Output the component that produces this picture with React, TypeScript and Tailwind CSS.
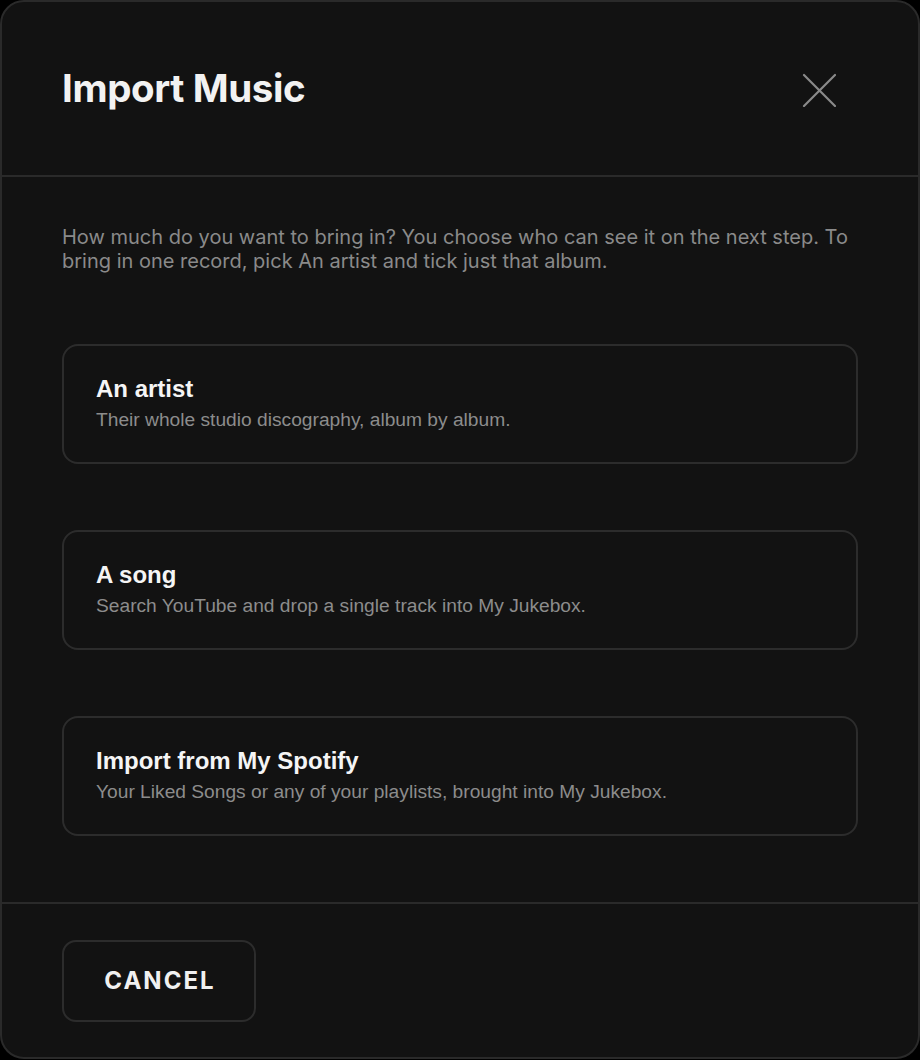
import React from "react";

const options = [
  { title: "An artist", desc: "Their whole studio discography, album by album." },
  { title: "A song", desc: "Search YouTube and drop a single track into My Jukebox." },
  { title: "Import from My Spotify", desc: "Your Liked Songs or any of your playlists, brought into My Jukebox." },
];

export default function App() {
  return (
    <div className="min-h-screen w-[920px] bg-black">
      <div className="flex h-[1059px] w-[920px] flex-col rounded-[24px] border-2 border-[#2a2a2a] bg-[#121212] font-['Inter',sans-serif]">
        <div className="flex h-[175px] shrink-0 items-center justify-between border-b-2 border-[#2a2a2a] pl-[60px] pr-[82px]">
          <h1 className="text-[38.5px] font-bold leading-none tracking-[-0.01em] text-[#f2f2f2]">Import Music</h1>
          <button className="mt-[3px] flex h-[34px] w-[34px] items-center justify-center text-[#8a8a8a]" aria-label="Close">
            <svg width="34" height="34" viewBox="0 0 34 34" fill="none" stroke="currentColor" strokeWidth="2.2" strokeLinecap="round">
              <path d="M2 2L33 33M33 2L2 33" />
            </svg>
          </button>
        </div>
        <div className="flex flex-col px-[60px] pb-[66px] pt-[48px]">
          <p className="text-[20px] leading-[24px] text-[#8a8a8a]">
            How much do you want to bring in? You choose who can see it on the next step. To bring in one record, pick An artist and tick just that album.
          </p>
          <div className="mt-[71px] flex flex-col gap-[66px]">
            {options.map((o) => (
              <div
                key={o.title}
                className="flex h-[120px] flex-col justify-center gap-[5px] rounded-[16px] border-2 border-[#2c2c2c] px-[32px] pb-[2px] font-['Liberation_Sans',Arial,sans-serif]"
              >
                <div className="text-[24px] font-bold leading-[28px] text-[#f5f5f5]">{o.title}</div>
                <div className="text-[19.2px] leading-[23px] text-[#8c8c8c]">{o.desc}</div>
              </div>
            ))}
          </div>
        </div>
        <div className="flex flex-1 items-start border-t-2 border-[#2a2a2a] px-[60px] pt-[36px]">
          <button className="flex h-[82px] w-[194px] items-center justify-center rounded-[14px] border-2 border-[#2c2c2c] pl-[2px] text-[24px] font-bold tracking-[0.085em] text-[#f0f0f0]">
            CANCEL
          </button>
        </div>
      </div>
    </div>
  );
}
